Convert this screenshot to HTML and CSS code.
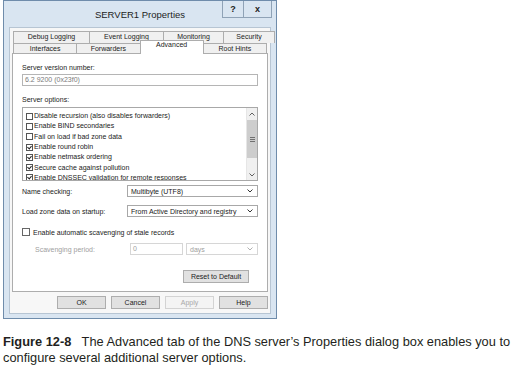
FILE: index.html
```html
<!DOCTYPE html>
<html lang="en">

<head>
    <meta charset="UTF-8">
    <meta name="viewport" content="width=device-width, initial-scale=1.0">
    <title>SERVER1 Properties</title>
    <link rel="stylesheet" href="styles.css">
</head>

<body>
    <div class="figure">
        <div class="window">
            <div class="titlebar">
                <span></span>
                <div class="title">SERVER1 Properties</div>
                <div class="caption-btns">
                    <span class="cbtn help">?</span>
                    <span class="cbtn close">x</span>
                </div>
            </div>

            <div class="client">
                <div class="tabs">
                    <div class="tab-row back">
                        <div class="tab debug">Debug Logging</div>
                        <div class="tab events">Event Logging</div>
                        <div class="tab monitor">Monitoring</div>
                        <div class="tab security">Security</div>
                    </div>
                    <div class="tab-row front">
                        <div class="tab">Interfaces</div>
                        <div class="tab">Forwarders</div>
                        <div class="tab active">Advanced</div>
                        <div class="tab">Root Hints</div>
                    </div>
                </div>

                <div class="tab-page">
                    <div class="label first">Server version number:</div>
                    <div class="textbox readonly">6.2 9200 (0x23f0)</div>

                    <div class="label options-label">Server options:</div>
                    <div class="listbox">
                        <ul class="options">
                            <li><span class="cb"></span>Disable recursion (also disables forwarders)</li>
                            <li><span class="cb"></span>Enable BIND secondaries</li>
                            <li><span class="cb"></span>Fail on load if bad zone data</li>
                            <li><span class="cb checked"></span>Enable round robin</li>
                            <li><span class="cb checked"></span>Enable netmask ordering</li>
                            <li><span class="cb checked"></span>Secure cache against pollution</li>
                            <li><span class="cb checked"></span>Enable DNSSEC validation for remote responses</li>
                        </ul>
                        <div class="scrollbar">
                            <div class="sb-arrow">
                                <svg width="6" height="4" viewBox="0 0 6 4"><polyline points="0.5,3.5 3,1 5.5,3.5" fill="none" stroke="#606060" stroke-width="1"/></svg>
                            </div>
                            <div class="sb-track">
                                <div class="sb-thumb">
                                    <svg width="5" height="5" viewBox="0 0 5 5"><path d="M0 0.5h5M0 2.5h5M0 4.5h5" stroke="#707070" stroke-width="1"/></svg>
                                </div>
                            </div>
                            <div class="sb-arrow">
                                <svg width="6" height="4" viewBox="0 0 6 4"><polyline points="0.5,0.5 3,3 5.5,0.5" fill="none" stroke="#606060" stroke-width="1"/></svg>
                            </div>
                        </div>
                    </div>

                    <div class="form-row name-row">
                        <span>Name checking:</span>
                        <div class="combo">
                            <span>Multibyte (UTF8)</span>
                            <svg width="6" height="4" viewBox="0 0 6 4"><polyline points="0.5,0.5 3,3 5.5,0.5" fill="none" stroke="#333" stroke-width="1"/></svg>
                        </div>
                    </div>
                    <div class="form-row load-row">
                        <span>Load zone data on startup:</span>
                        <div class="combo">
                            <span>From Active Directory and registry</span>
                            <svg width="6" height="4" viewBox="0 0 6 4"><polyline points="0.5,0.5 3,3 5.5,0.5" fill="none" stroke="#333" stroke-width="1"/></svg>
                        </div>
                    </div>

                    <div class="check-row">
                        <span class="cb big"></span>
                        <span>Enable automatic scavenging of stale records</span>
                    </div>
                    <div class="period-row">
                        <span>Scavenging period:</span>
                        <div class="textbox disabled">0</div>
                        <div class="combo disabled">
                            <span>days</span>
                            <svg width="6" height="4" viewBox="0 0 6 4"><polyline points="0.5,0.5 3,3 5.5,0.5" fill="none" stroke="#b0b0b0" stroke-width="1"/></svg>
                        </div>
                    </div>

                    <div class="reset-row">
                        <button class="button">Reset to Default</button>
                    </div>
                </div>

                <div class="dialog-buttons">
                    <button class="button">OK</button>
                    <button class="button">Cancel</button>
                    <button class="button" disabled>Apply</button>
                    <button class="button">Help</button>
                </div>
            </div>
        </div>

        <p class="caption"><b>Figure 12-8</b> The Advanced tab of the DNS server’s Properties dialog box enables you to configure several additional server options.</p>
    </div>
</body>

</html>
```

FILE: styles.css
```css
body {
    margin: 0;
    background: #fff;
    font-family: 'Liberation Sans', Arial, sans-serif;
    color: #222;
}

.figure {
    padding-left: 3px;
}

.window {
    width: 274px;
    box-sizing: border-box;
    border: 1px solid #6f8cab;
    background: #d9e5f1;
    padding: 0 5px 4px;
}

.titlebar {
    display: grid;
    grid-template-columns: 1fr auto 1fr;
    height: 26px;
}

.title {
    font-size: 9.5px;
    color: #1d1d1d;
    padding-top: 8px;
}

.caption-btns {
    justify-self: end;
    display: flex;
    margin-right: -1px;
}

.cbtn {
    height: 17px;
    box-sizing: border-box;
    border: 1px solid #8fa2b6;
    border-top: none;
    display: flex;
    align-items: center;
    justify-content: center;
    font-size: 9px;
    font-weight: bold;
    color: #222;
}

.help {
    width: 22px;
}

.close {
    width: 28px;
    border-left: none;
}

.client {
    background: #f7f7f7;
    border: 1px solid #b7c5d3;
    padding: 3px 2px 4px 2px;
}

/* tabs */
.tab-row {
    display: flex;
    padding: 0 1px;
}

.tab-row.back {
    height: 12px;
}

.tab-row.front {
    height: 10px;
}

.tab {
    flex: 1;
    border: 1px solid #adadad;
    border-bottom: none;
    margin-left: -1px;
    background: #f0f0f0;
    font-size: 7px;
    line-height: 10px;
    text-align: center;
    white-space: nowrap;
}

.front .tab {
    line-height: 9px;
}

.tab:first-child {
    margin-left: 0;
}

.back .tab {
    flex: none;
}

.tab.debug {
    width: 75px;
}

.tab.events {
    width: 73px;
}

.tab.monitor {
    width: 59px;
}

.tab.security {
    width: 50px;
}

.front .tab.active {
    position: relative;
    z-index: 1;
    background: #fff;
    margin-top: -3px;
    margin-bottom: -1px;
    line-height: 8px;
}

.tab-page {
    height: 239px;
    box-sizing: border-box;
    border: 1px solid #adadad;
    background: #fff;
    padding: 9px 9px 0;
    font-size: 7px;
}

.label {
    line-height: 10px;
}

.textbox {
    height: 12px;
    box-sizing: border-box;
    border: 1px solid #b5b5b5;
    padding-left: 2px;
    line-height: 10px;
}

.textbox.readonly {
    margin-top: 1px;
    color: #7a7a7a;
}

.options-label {
    margin-top: 9px;
}

.listbox {
    margin-top: 2px;
    height: 74px;
    box-sizing: border-box;
    border: 1px solid #a8a8a8;
    display: flex;
    overflow: hidden;
}

.options {
    flex: 1;
    list-style: none;
    margin: 0;
    padding: 3px 0 0 3px;
}

.options li {
    height: 10.3px;
    line-height: 10px;
    display: flex;
    align-items: center;
    white-space: nowrap;
}

.cb {
    width: 7px;
    height: 7px;
    box-sizing: border-box;
    border: 1px solid #555;
    background: #fff;
    margin-right: 1px;
    flex: none;
    position: relative;
}

.cb.checked::after {
    content: '';
    position: absolute;
    left: 1px;
    top: 0;
    width: 2px;
    height: 3px;
    border: solid #222;
    border-width: 0 1px 1px 0;
    transform: rotate(40deg);
}

.cb.big {
    width: 8px;
    height: 8px;
    border-color: #666;
    margin-right: 3px;
}

.scrollbar {
    width: 10px;
    display: flex;
    flex-direction: column;
    background: #f0f0f0;
    border-left: 1px solid #e6e6e6;
}

.sb-arrow {
    height: 11px;
    display: flex;
    align-items: center;
    justify-content: center;
    flex: none;
}

.sb-track {
    flex: 1;
    padding: 1px 0 11px;
}

.sb-thumb {
    height: 100%;
    background: #cdcdcd;
    display: flex;
    align-items: center;
    justify-content: center;
}

.form-row {
    display: grid;
    grid-template-columns: 105px 1fr;
    align-items: center;
    height: 12px;
}

.name-row {
    margin-top: 4px;
}

.load-row {
    margin-top: 8px;
}

.combo {
    height: 12px;
    box-sizing: border-box;
    border: 1px solid #a8a8a8;
    background: #fff;
    display: flex;
    align-items: center;
    justify-content: space-between;
    padding: 0 4px 0 3px;
}

.combo.disabled {
    border-color: #d6d6d6;
    color: #a0a0a0;
}

.check-row {
    display: flex;
    align-items: center;
    height: 10px;
    margin-top: 10px;
}

.period-row {
    display: grid;
    grid-template-columns: 92px 53px 1fr;
    column-gap: 3px;
    align-items: center;
    height: 12px;
    margin-top: 6px;
    padding-left: 13px;
    color: #a0a0a0;
}

.textbox.disabled {
    border-color: #d6d6d6;
}

.reset-row {
    display: flex;
    justify-content: flex-end;
    margin-top: 15px;
    padding-right: 9px;
}

.button {
    font-family: inherit;
    font-size: 7px;
    color: #222;
    height: 13px;
    padding: 0;
    border: 1px solid #adadad;
    background: #e1e1e1;
}

.reset-row .button {
    width: 66px;
}

.button:disabled {
    color: #a8a8a8;
    border-color: #d3d3d3;
    background: #f4f4f4;
}

.dialog-buttons {
    display: flex;
    justify-content: flex-end;
    gap: 5px;
    margin-top: 4px;
}

.dialog-buttons .button {
    width: 49px;
}

.caption {
    margin: 15px 0 0;
    font-size: 12.8px;
    line-height: 16px;
    color: #231f20;
    width: 518px;
}

.caption b {
    margin-right: 7px;
}
```
